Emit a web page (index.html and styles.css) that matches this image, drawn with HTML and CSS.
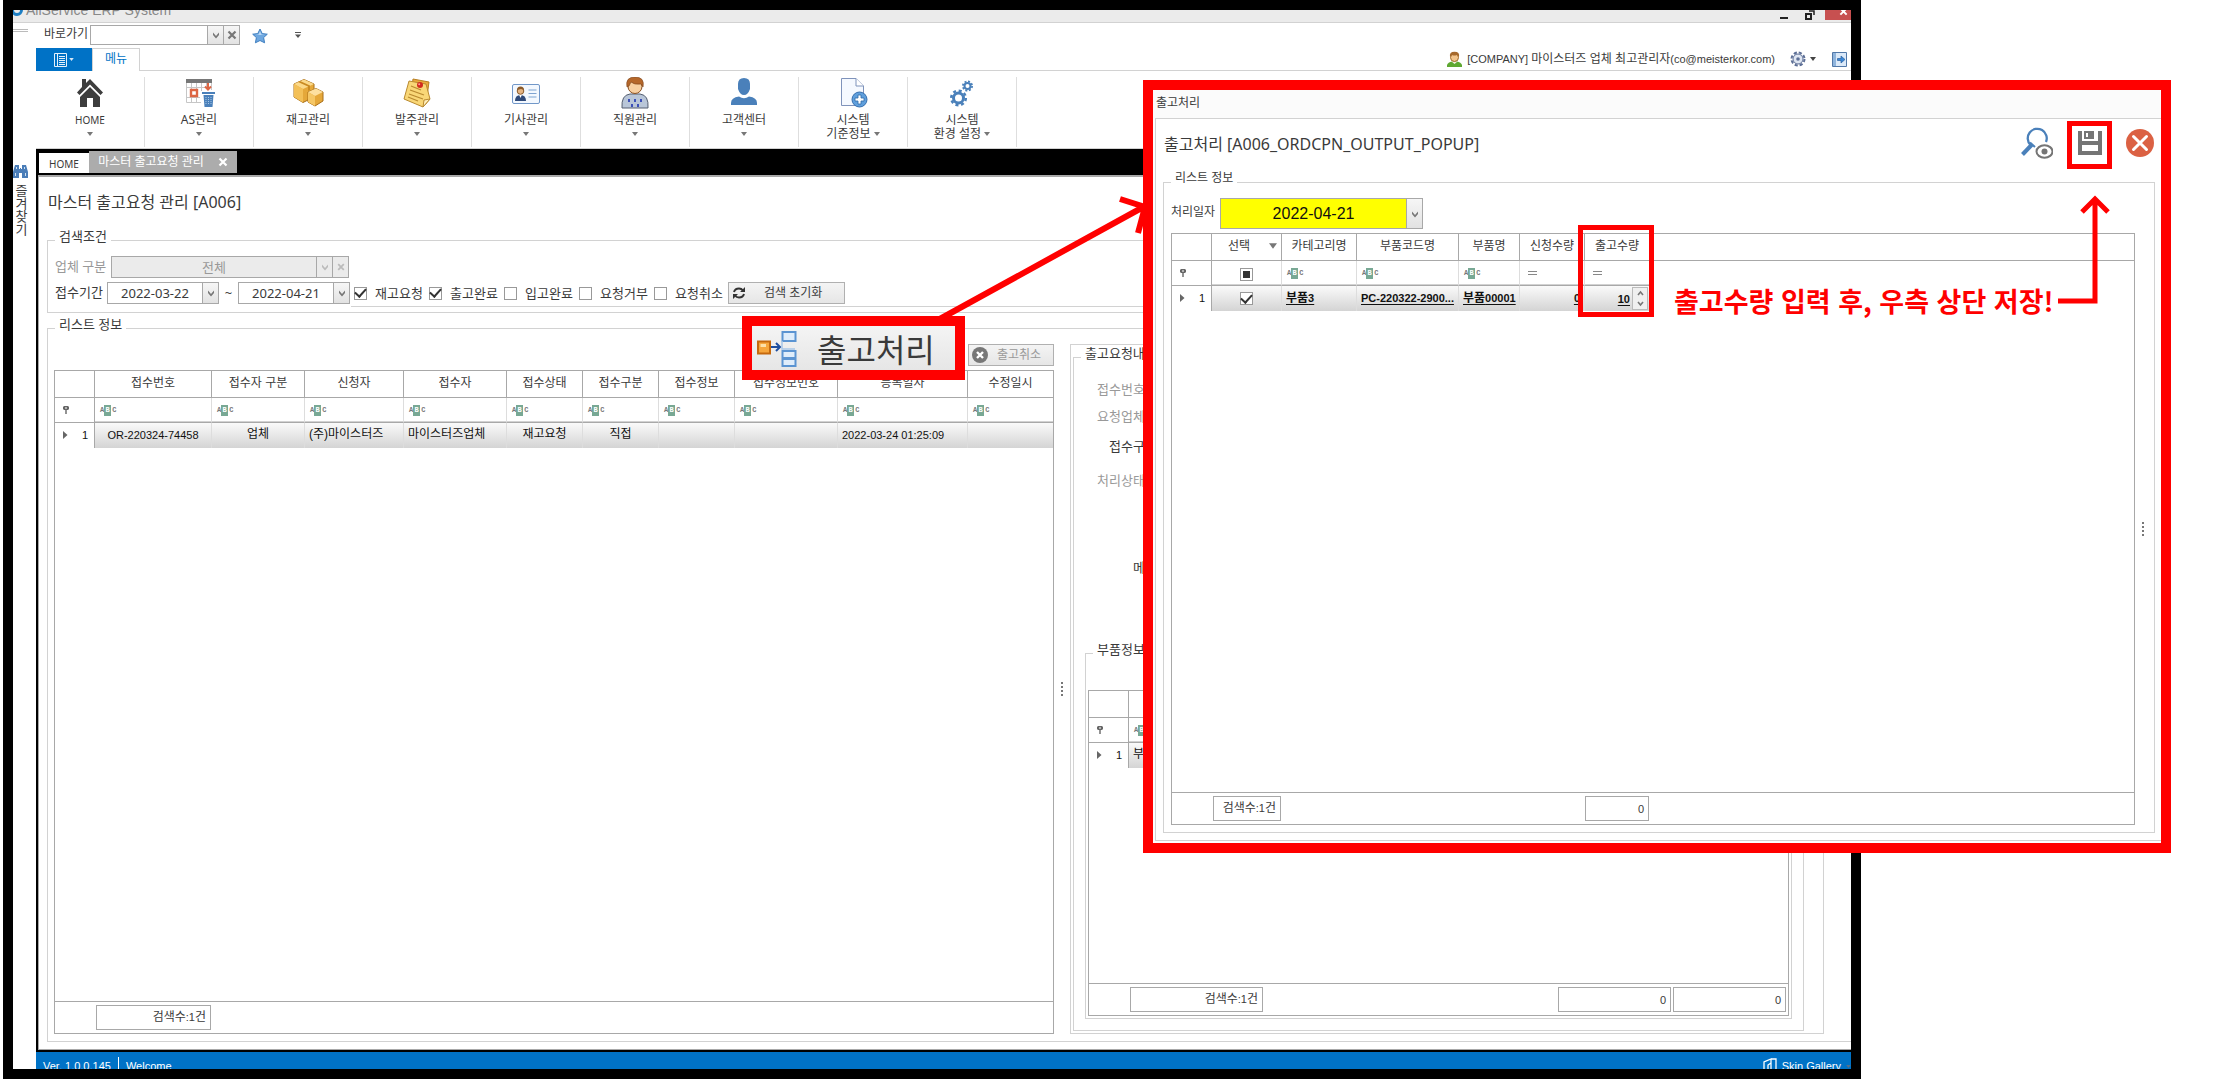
FILE: index.html
```html
<!DOCTYPE html>
<html lang="ko">
<head>
<meta charset="utf-8">
<title>AllService ERP System</title>
<link rel="stylesheet" href="styles.css">
</head>
<body>
<svg class="defs" aria-hidden="true">
  <symbol id="chev" viewBox="0 0 8 8"><path d="M1 1.500 4 5 7 1.500V4L4 7.500 1 4z" fill="currentColor"/></symbol>
  <symbol id="cross" viewBox="0 0 10 10"><path d="M1.500 1.500 8.500 8.500M8.500 1.500 1.500 8.500" stroke="currentColor" stroke-width="2.200" fill="none"/></symbol>
  <symbol id="caret" viewBox="0 0 6 4"><path d="M0 0H6L3 4z" fill="currentColor"/></symbol>
  <symbol id="pin" viewBox="0 0 6 8"><path d="M1 0H5L6 1V3L5 4H3.700V8H2.300V4H1L0 3V1z" fill="#666"/><path d="M2 1.500H4V2.500H2z" fill="#fff"/></symbol>
  <symbol id="rowmark" viewBox="0 0 5 8"><path d="M0 0 4.500 4 0 8z" fill="#666"/></symbol>
</svg>

<div class="app">
  <header class="titlebar">
    <div class="titlebar-name">
      <svg width="10" height="14" viewBox="0 0 10 14"><circle cx="4" cy="7" r="4.500" fill="none" stroke="#1d7fc4" stroke-width="3"/></svg>
      <span>AllService ERP System</span>
    </div>
    <div class="window-buttons">
      <button type="button" aria-label="최소화"><svg width="8" height="6" viewBox="0 0 8 6"><path d="M0 3H8V5H0z" fill="#222"/></svg></button>
      <button type="button" aria-label="이전 크기로"><svg width="10" height="10" viewBox="0 0 10 10"><path d="M1 4H6V9H1z" fill="none" stroke="#222" stroke-width="2"/><path d="M4 1H9V5" fill="none" stroke="#222" stroke-width="1.500"/></svg></button>
      <button type="button" class="win-close" aria-label="닫기"><svg width="9" height="9" viewBox="0 0 10 10" color="#fff"><use href="#cross"/></svg></button>
    </div>
  </header>

  <div class="app-body">
    <aside class="dock">
      <span class="dock-grip"></span>
      <svg width="15" height="15" viewBox="0 0 15 15"><path d="M2 1H6V5H7V4H8V5H9V1H13L15 8V14H9V9H6V14H0V8z" fill="#4a7db8"/><path d="M3 3H4V5H3zM11 3H12V5H11zM2 9H3V12H2zM12 9H13V12H12z" fill="#cfe0f0"/></svg>
      <span class="dock-text">즐겨찾기</span>
    </aside>

    <div class="workspace">
      <div class="quickbar">
        <label for="goto">바로가기</label>
        <div class="combo combo-goto">
          <select id="goto"><option></option></select>
          <span class="combo-btn"><svg width="8" height="8"><use href="#chev"/></svg></span>
          <button type="button" class="combo-btn" aria-label="지우기"><svg width="10" height="10"><use href="#cross"/></svg></button>
        </div>
        <button type="button" class="plain star" aria-label="즐겨찾기"><svg width="16" height="16" viewBox="0 0 16 16"><path d="M8 1 10.200 5.600 15.300 6.200 11.600 9.600 12.600 14.800 8 12.500 3.400 14.800 4.400 9.600 .7 6.200 5.800 5.600z" fill="#6fa8e0" stroke="#3f7fc0"/><path d="M8 3 9.500 6.500 13 7H3L6.500 6.500z" fill="#b5d6f5"/></svg></button>
        <svg class="quick-more" width="6" height="7" viewBox="0 0 6 7"><path d="M0 0H6V1H0zM0 2.500H6L3 6z" fill="#555"/></svg>
      </div>

      <div class="ribbon-tabs">
        <button type="button" class="file-tab" aria-label="파일">
          <svg width="13" height="14" viewBox="0 0 13 14"><path d="M.5 .5H12.500V13.500H.5zM3.500 .5V13.500M5 3.500H11M5 5.500H11M5 7.500H11M5 9.500H11M5 11.500H11" stroke="#e6f0fa" fill="none"/></svg>
          <svg width="5" height="3" color="#d5e6f5"><use href="#caret"/></svg>
        </button>
        <button type="button" class="menu-tab">메뉴</button>
        <div class="user">
          <svg width="15" height="16" viewBox="0 0 15 16"><path d="M0 16V14Q1 11 5 10.500H10Q14 11 15 14V16z" fill="#5fa832"/><path d="M4.500 10.500 7.500 13 10.500 10.500z" fill="#f4f0e0"/><circle cx="7.500" cy="6.500" r="4" fill="#f2c48c" stroke="#a06a2a"/><path d="M3 6Q2 .8 7.500 .8 13 .8 12 6L10 4Q7 5 5 4z" fill="#a5682c"/></svg>
          <span>[COMPANY] <span class="ko">마이스터즈 업체 최고관리자</span>(co@meisterkor.com)</span>
          <button type="button" class="plain gear" aria-label="설정"><svg width="16" height="16" viewBox="0 0 16 16"><circle cx="8" cy="8" r="6.500" fill="none" stroke="#5d6f96" stroke-width="2" stroke-dasharray="3.200 1.900"/><circle cx="8" cy="8" r="5" fill="#dfe6f2" stroke="#5d6f96"/><circle cx="8" cy="8" r="1.800" fill="#5d6f96"/></svg><svg width="6" height="4" color="#444"><use href="#caret"/></svg></button>
          <button type="button" class="plain" aria-label="나가기"><svg width="15" height="15" viewBox="0 0 15 15"><path d="M.5 .5H14.500V14.500H.5z" fill="#dbe9f8" stroke="#5178a8"/><path d="M1 1H4V14H1z" fill="#8fb4dc"/><path d="M5.500 6.500H9V4L13 7.500 9 11V8.500H5.500z" fill="#3b87d6" stroke="#2a5f9e" stroke-width=".7"/></svg></button>
        </div>
      </div>

      <nav class="ribbon">
        <button type="button" class="ribbon-item">
          <svg class="ribbon-icon" viewBox="0 0 32 32"><path d="M16 2 29 15.500 26.500 18 16 7.500 5.500 18 3 15.500 8 10V2H12V6z" fill="#3d3d3d"/><path d="M16 10 26 20V30H19V21H13V30H6V20z" fill="#3d3d3d"/></svg>
          <span class="latin">HOME</span><svg class="drop" width="6" height="4"><use href="#caret"/></svg>
        </button>
        <button type="button" class="ribbon-item">
          <svg class="ribbon-icon" viewBox="0 0 32 32"><path d="M3 2H29V6H3z" fill="#777"/><path d="M3.500 6V25.500H18M3.500 10.500H29M3.500 20.500H17M8.500 6V25M13.500 6V25M18.500 6V14M23.500 6V10M28.500 6V13" fill="none" stroke="#c6c6c6"/><path d="M8 13H14V19H8z" fill="#fff" stroke="#dd6644" stroke-width="2.400"/><path d="M25 6V12M22 9.500 25 12.500 28 9.500" stroke="#dd6644" stroke-width="2" fill="none"/><path d="M19 15H32V17H19zM20.500 18H30.500L29.500 30H21.500z" fill="#4a80ba"/><path d="M23 20V28M25.500 20V28M28 20V28" stroke="#a9c8e6" stroke-dasharray="1 1"/></svg>
          <span>AS관리</span><svg class="drop" width="6" height="4"><use href="#caret"/></svg>
        </button>
        <button type="button" class="ribbon-item">
          <svg class="ribbon-icon" viewBox="0 0 32 32"><path d="M2 7 12 2.500 22 7V20L11 25.500 2 20z" fill="#e5a83a" stroke="#a86e18"/><path d="M2 7 12 2.500 22 7 11 12z" fill="#fbd98a"/><path d="M11 12V25.500L2 20V7z" fill="#f3c058"/><path d="M6 5 16 9.500V14L18 13V8.500L8 4z" fill="#c98a22"/><path d="M16 15 24 11.500 31 15V24L23 29 16 25z" fill="#e5a83a" stroke="#a86e18"/><path d="M16 15 24 11.500 31 15 23 19z" fill="#fde0a0"/><path d="M23 19V29L16 25V15z" fill="#f5c766"/></svg>
          <span>재고관리</span><svg class="drop" width="6" height="4"><use href="#caret"/></svg>
        </button>
        <button type="button" class="ribbon-item">
          <svg class="ribbon-icon" viewBox="0 0 32 32"><path d="M12 2 28 5 25 27 9 24z" fill="#eaa93c" stroke="#b87f22"/><path d="M8 4 25 7 29 22 22 30 3 22z" fill="#f9d777" stroke="#b98a30"/><path d="M10 9 20 13M9 13 23 18M8 17 22 22M7 20 17 24" stroke="#b98a30" stroke-width="1.300"/><path d="M22 30 23 23 29 22z" fill="#fff0bd" stroke="#b98a30"/><circle cx="19" cy="8" r="3" fill="#d22a1e"/><circle cx="18.200" cy="7.200" r="1" fill="#ff9d90"/></svg>
          <span>발주관리</span><svg class="drop" width="6" height="4"><use href="#caret"/></svg>
        </button>
        <button type="button" class="ribbon-item">
          <svg class="ribbon-icon" viewBox="0 0 32 32"><rect x="2.500" y="7.500" width="27" height="19" rx="1.500" fill="#f3f8fe" stroke="#7197c8"/><path d="M5 24Q5 18 10.500 18 16 18 16 24z" fill="#2f4a7a"/><path d="M9 17.500 10.500 21 12 17.500z" fill="#fff"/><circle cx="10.500" cy="14" r="3.300" fill="#e5b583" stroke="#8a5a2a"/><path d="M7 13Q7 9.500 10.500 9.500 14 9.500 14 13L11 12z" fill="#8a5a2a"/><path d="M18.500 13H26.500M18.500 16.500H26.500M18.500 20H26.500" stroke="#7fa3d0" stroke-width="1.200"/></svg>
          <span>기사관리</span><svg class="drop" width="6" height="4"><use href="#caret"/></svg>
        </button>
        <button type="button" class="ribbon-item">
          <svg class="ribbon-icon" viewBox="0 0 32 32"><path d="M3 31Q2 18 11 17H21Q30 18 29 31z" fill="#b9c6d8" stroke="#555f70"/><path d="M9 22H11V25H9zM15 22H17V25H15zM21 22H23V25H21zM12 27H14V30H12zM18 27H20V30H18z" fill="#3c50b8"/><circle cx="16" cy="9.500" r="7" fill="#f7cfa0" stroke="#8a5020"/><path d="M8 10Q6 0 16 0 26 0 24 10L22 7Q15 8 12 5L10 9z" fill="#b5672a" stroke="#7a421a" stroke-width=".6"/></svg>
          <span>직원관리</span><svg class="drop" width="6" height="4"><use href="#caret"/></svg>
        </button>
        <button type="button" class="ribbon-item">
          <svg class="ribbon-icon" viewBox="0 0 32 32"><path d="M10 7Q10 1 16 1 22 1 22 7V12Q20 18 16 18 12 18 10 12z" fill="#4a80ba"/><path d="M3 28V26Q3 20.500 11 19.500 16 23 21 19.500 29 20.500 29 26V28z" fill="#4a80ba"/></svg>
          <span>고객센터</span><svg class="drop" width="6" height="4"><use href="#caret"/></svg>
        </button>
        <button type="button" class="ribbon-item">
          <svg class="ribbon-icon" viewBox="0 0 32 32"><path d="M4.500 1.500H19L26.500 9V28.500H4.500z" fill="#f5f9ff" stroke="#7f93bb"/><path d="M19 1.500V9H26.500" fill="#fff" stroke="#7f93bb"/><circle cx="22.500" cy="22.500" r="7.500" fill="#5f9fdc" stroke="#376fae"/><path d="M21 18H24V21H27V24H24V27H21V24H18V21H21z" fill="#fff" stroke="#2f6aa8" stroke-width=".8"/></svg>
          <span>시스템<br>기준정보 <svg width="6" height="4"><use href="#caret"/></svg></span>
        </button>
        <button type="button" class="ribbon-item">
          <svg class="ribbon-icon" viewBox="0 0 32 32"><circle cx="12.500" cy="21" r="7.300" fill="none" stroke="#4a80ba" stroke-width="2.500" stroke-dasharray="3 2.730"/><circle cx="12.500" cy="21" r="5" fill="none" stroke="#4a80ba" stroke-width="3"/><circle cx="21.500" cy="9" r="4.600" fill="none" stroke="#4a80ba" stroke-width="1.800" stroke-dasharray="2 1.610"/><circle cx="21.500" cy="9" r="3" fill="none" stroke="#4a80ba" stroke-width="2"/></svg>
          <span>시스템<br>환경 설정 <svg width="6" height="4"><use href="#caret"/></svg></span>
        </button>
      </nav>

      <div class="doc-tabs">
        <button type="button" class="doc-tab latin">HOME</button>
        <button type="button" class="doc-tab active"><span>마스터 출고요청 관리</span><svg width="10" height="10"><use href="#cross"/></svg></button>
      </div>

      <main class="page">
        <h1 class="page-title">마스터 출고요청 관리 [A006]</h1>

        <fieldset class="group open-end search">
          <legend>검색조건</legend>
          <div class="search-row disabled">
            <label for="company">업체 구분</label>
            <div class="combo combo-company">
              <select id="company" disabled><option>전체</option></select>
              <span class="combo-btn"><svg width="8" height="8"><use href="#chev"/></svg></span>
              <button type="button" class="combo-btn" aria-label="지우기" disabled><svg width="8" height="8"><use href="#cross"/></svg></button>
            </div>
          </div>
          <div class="search-row">
            <label for="from">접수기간</label>
            <div class="combo combo-date"><input id="from" type="text" value="2022-03-22"><button type="button" class="combo-btn" aria-label="달력"><svg width="8" height="8"><use href="#chev"/></svg></button></div>
            <span class="tilde">~</span>
            <div class="combo combo-date"><input id="to" type="text" value="2022-04-21" aria-label="종료일"><button type="button" class="combo-btn" aria-label="달력"><svg width="8" height="8"><use href="#chev"/></svg></button></div>
            <div class="checks">
              <label><input type="checkbox" checked>재고요청</label>
              <label><input type="checkbox" checked>출고완료</label>
              <label><input type="checkbox">입고완료</label>
              <label><input type="checkbox">요청거부</label>
              <label><input type="checkbox">요청취소</label>
            </div>
            <button type="button" class="btn reset"><svg width="14" height="12" viewBox="0 0 14 12"><path d="M2 5Q3 1.500 7 1.500 9.500 1.500 11 3.500M12 7Q11 10.500 7 10.500 4.500 10.500 3 8.500" fill="none" stroke="#333" stroke-width="2"/><path d="M13 0V5H8zM1 12V7H6z" fill="#333"/></svg><span>검색 초기화</span></button>
          </div>
          <div class="rule"></div>
        </fieldset>

        <fieldset class="group open-end list">
          <legend>리스트 정보</legend>
          <section class="list-pane">
            <div class="toolbar">
              <button type="button" class="btn callout">
                <svg width="40" height="42" viewBox="0 0 40 42"><path d="M1 12.500H13V24.500H1z" fill="#f6a63c" stroke="#c5690e" stroke-width="2"/><path d="M3.500 15H9V18H3.500z" fill="#fde0a8"/><path d="M14 18H22M19 14 23 18 19 22" stroke="#1f4fa0" stroke-width="2" fill="none"/><path d="M25.500 3H38.500V12H25.500zM25.500 22H38.500V29H25.500zM25.500 30H38.500V37H25.500z" fill="#dfedfb" stroke="#5b94d2" stroke-width="2"/><path d="M25 12V20H38" stroke="#a8c6e8" stroke-width="1.500" fill="none"/></svg>
                <span>출고처리</span>
              </button>
              <button type="button" class="btn cancel" disabled><svg width="16" height="16" viewBox="0 0 16 16"><circle cx="8" cy="8" r="8" fill="#777"/><path d="M5 5 11 11M11 5 5 11" stroke="#fff" stroke-width="2.400"/></svg><span>출고취소</span></button>
            </div>
            <div class="grid">
              <table>
                <colgroup><col class="w40"><col class="w117"><col class="w93"><col class="w99"><col class="w103"><col class="w76"><col class="w76"><col class="w76"><col class="w103"><col class="w130"><col></colgroup>
                <thead>
                  <tr><th></th><th>접수번호</th><th>접수자 구분</th><th>신청자</th><th>접수자</th><th>접수상태</th><th>접수구분</th><th>접수정보</th><th>접수정보번호</th><th>등록일자</th><th>수정일시</th></tr>
                </thead>
                <tbody>
                  <tr class="filter"><td class="mark"><svg width="6" height="8"><use href="#pin"/></svg></td><td><span class="abc">A<b>B</b>C</span></td><td><span class="abc">A<b>B</b>C</span></td><td><span class="abc">A<b>B</b>C</span></td><td><span class="abc">A<b>B</b>C</span></td><td><span class="abc">A<b>B</b>C</span></td><td><span class="abc">A<b>B</b>C</span></td><td><span class="abc">A<b>B</b>C</span></td><td><span class="abc">A<b>B</b>C</span></td><td><span class="abc">A<b>B</b>C</span></td><td><span class="abc">A<b>B</b>C</span></td></tr>
                  <tr class="data"><td class="mark"><svg width="5" height="8"><use href="#rowmark"/></svg><span>1</span></td><td class="c">OR-220324-74458</td><td class="c ko">업체</td><td class="ko">(주)마이스터즈</td><td class="ko">마이스터즈업체</td><td class="c ko">재고요청</td><td class="c ko">직접</td><td></td><td></td><td>2022-03-24 01:25:09</td><td></td></tr>
                </tbody>
              </table>
              <div class="grid-foot"><output class="sum sum-main"><span class="ko">검색수</span>:1<span class="ko">건</span></output></div>
            </div>
          </section>

          <div class="splitter"><i></i><i></i><i></i><i></i></div>

          <section class="detail-pane">
            <fieldset class="group detail">
              <legend>출고요청내역</legend>
              <ul class="fields">
                <li class="dim">접수번호</li>
                <li class="dim">요청업체</li>
                <li class="tall indent">접수구분</li>
                <li class="tall dim">처리상태</li>
                <li class="memo">메모</li>
              </ul>
              <fieldset class="group parts">
                <legend>부품정보</legend>
                <div class="grid">
                  <table>
                    <colgroup><col class="w40"><col></colgroup>
                    <thead><tr><th></th><th></th></tr></thead>
                    <tbody>
                      <tr class="filter"><td class="mark"><svg width="6" height="8"><use href="#pin"/></svg></td><td><span class="abc">A<b>B</b>C</span></td></tr>
                      <tr class="data"><td class="mark"><svg width="5" height="8"><use href="#rowmark"/></svg><span>1</span></td><td class="ko">부품3</td></tr>
                    </tbody>
                  </table>
                  <div class="grid-foot"><output class="sum sum-parts"><span class="ko">검색수</span>:1<span class="ko">건</span></output><output class="sum sum-qty push">0</output><output class="sum sum-qty">0</output></div>
                </div>
              </fieldset>
            </fieldset>
          </section>
        </fieldset>
      </main>

      <footer class="status">
        <div class="status-line">
          <span>Ver. 1.0.0.145</span><span class="status-sep"></span><span>Welcome</span>
          <button type="button" class="skin"><svg width="14" height="16" viewBox="0 0 14 16"><path d="M1 16V4L8 1V13L5 16M8 1H13V16M5 16V7L8 5" fill="none" stroke="#fff" stroke-width="1.300"/></svg>Skin Gallery <svg width="5" height="3" color="#5a6f86"><use href="#caret"/></svg></button>
        </div>
      </footer>
    </div>
  </div>
</div>

<svg class="link-arrow" width="220" height="130" viewBox="0 0 220 130" aria-hidden="true"><path d="M9 125 218 10M191 4 216 12 209 38" fill="none" stroke="#f00" stroke-width="6"/></svg>

<div class="popup" role="dialog" aria-label="출고처리">
  <div class="popup-caption">출고처리</div>
  <div class="popup-body">
    <div class="popup-head">
      <h2>출고처리 [A006_ORDCPN_OUTPUT_POPUP]</h2>
      <div class="popup-actions">
        <button type="button" class="action" aria-label="조회"><svg width="32" height="32" viewBox="0 0 32 32"><path d="M9.500 18A9.500 9.500 0 1 1 25 15" fill="none" stroke="#4a80ba" stroke-width="2.300"/><path d="M11 17.500 1.500 27.500" stroke="#4a80ba" stroke-width="4"/><path d="M9 15.500 14 20" stroke="#4a80ba" stroke-width="2"/><ellipse cx="23.500" cy="24.500" rx="8" ry="6.200" fill="#fff" stroke="#757575" stroke-width="2"/><circle cx="23.500" cy="24.500" r="3" fill="#757575"/></svg></button>
        <button type="button" class="action save" aria-label="저장"><svg width="24" height="24" viewBox="0 0 24 24"><path d="M0 0H4V10H20V0H24V24H0zM4 14V20H20V14z" fill="#757575" fill-rule="evenodd"/><path d="M6 0H16V8H6zM8 2V6H10V2z" fill="#757575" fill-rule="evenodd"/></svg></button>
        <button type="button" class="action" aria-label="닫기"><svg width="28" height="28" viewBox="0 0 28 28"><circle cx="14" cy="14" r="14" fill="#db6143"/><path d="M7.500 7.500 20.500 20.500M20.500 7.500 7.500 20.500" stroke="#fff" stroke-width="3" stroke-linecap="round"/></svg></button>
      </div>
    </div>
    <fieldset class="group popup-group">
      <legend>리스트 정보</legend>
      <div class="popup-date">
        <label for="workdate">처리일자</label>
        <div class="combo combo-work"><input id="workdate" type="text" value="2022-04-21"><button type="button" class="combo-btn" aria-label="달력"><svg width="8" height="8"><use href="#chev"/></svg></button></div>
      </div>
      <div class="popup-list">
        <div class="grid">
          <table>
            <colgroup><col class="w40"><col class="w70"><col class="w75"><col class="w102"><col class="w61"><col class="w65"><col class="w65"><col></colgroup>
            <thead>
              <tr><th></th><th><span class="sorted">선택<svg width="8" height="6"><use href="#caret"/></svg></span></th><th>카테고리명</th><th>부품코드명</th><th>부품명</th><th>신청수량</th><th>출고수량</th><th></th></tr>
            </thead>
            <tbody>
              <tr class="filter"><td class="mark"><svg width="6" height="8"><use href="#pin"/></svg></td><td class="c"><input type="checkbox" class="mixed" aria-label="모두 선택"></td><td><span class="abc">A<b>B</b>C</span></td><td><span class="abc">A<b>B</b>C</span></td><td><span class="abc">A<b>B</b>C</span></td><td><span class="eq"></span></td><td><span class="eq"></span></td><td class="void"></td></tr>
              <tr class="data"><td class="mark"><svg width="5" height="8"><use href="#rowmark"/></svg><span>1</span></td><td class="c"><input type="checkbox" checked aria-label="선택"></td><td><a href="#"><span class="ko">부품</span>3</a></td><td><a href="#">PC-220322-2900...</a></td><td><a href="#"><span class="ko">부품</span>00001</a></td><td class="r"><a href="#">0</a></td><td class="qty"><div class="spin"><input type="text" value="10" aria-label="출고수량"><div class="spin-btns"><button type="button" aria-label="증가"><svg width="7" height="6" viewBox="0 0 7 6"><path d="M1 5 3.500 2 6 5" fill="none" stroke="#777" stroke-width="1.600"/></svg></button><button type="button" aria-label="감소"><svg width="7" height="6" viewBox="0 0 7 6"><path d="M1 1 3.500 4 6 1" fill="none" stroke="#777" stroke-width="1.600"/></svg></button></div></div></td><td class="void"></td></tr>
            </tbody>
          </table>
          <div class="grid-foot"><output class="sum sum-popup"><span class="ko">검색수</span>:1<span class="ko">건</span></output><output class="sum sum-out">0</output></div>
        </div>
        <div class="splitter"><i></i><i></i><i></i><i></i></div>
      </div>
    </fieldset>
  </div>
  <span class="qty-frame"></span>
  <p class="note">출고수량 입력 후, 우측 상단 저장!</p>
  <svg class="note-arrow" width="54" height="112" viewBox="0 0 54 112" aria-hidden="true"><path d="M0 108H37V6M24 19 37 6 50 19" fill="none" stroke="#f00" stroke-width="5"/></svg>
</div>
</body>
</html>
```
FILE: styles.css
```css
* { box-sizing: border-box; }

:root {
  --line: #d2d2d2;
  --edge: #a8a8a8;
  --ink: #3a3a3a;
  --blue: #0072c6;
  --red: #f00;
}

body {
  margin: 0;
  min-height: 100vh;
  position: relative;
  overflow: hidden;
  background: #fff;
  color: var(--ink);
  font: 12px/16px "Noto Sans", "Noto Sans CJK KR", sans-serif;
}

button, input, select { font: inherit; color: inherit; margin: 0; padding: 0; border: 0; background: none; }
fieldset { min-width: 0; margin: 0; }
svg { display: block; flex: none; }
.defs { position: absolute; width: 0; height: 0; }
.ko { font-size: 12px; }
.latin { font-size: 10px; }
.plain { display: flex; align-items: center; }

/* application window */
.app {
  height: calc(100vh - 1px);
  margin: 0 364px 0 3px;
  border: 10px solid #000;
  display: flex;
  flex-direction: column;
  overflow: hidden;
  background: #fff;
}

.titlebar {
  flex: none;
  height: 13px;
  display: flex;
  justify-content: space-between;
  overflow: hidden;
  background: #ebebeb;
  border-bottom: 1px solid var(--line);
}
.titlebar-name {
  align-self: flex-end;
  display: flex;
  align-items: center;
  gap: 3px;
  height: 24px;
  color: #888;
  font: 14px/24px "Liberation Sans", sans-serif;
}
.window-buttons { display: flex; height: 10px; align-items: flex-end; gap: 12px; }
.window-buttons button { height: 8px; width: 14px; display: flex; justify-content: center; align-items: flex-end; }
.window-buttons .win-close { width: 26px; height: 10px; margin-left: -4px; background: #c75050; align-items: flex-start; }
.win-close svg { margin: -3px 0 0 10px; }

.app-body { flex: 1; display: flex; min-height: 0; }
.dock { flex: none; width: 23px; overflow: hidden; }
.dock-grip { display: block; width: 15px; height: 3px; margin: 6px 0 132px; border: solid #bbb; border-width: 1px 0; }
.dock-text { display: block; width: 15px; margin-top: 5px; font-size: 13px; line-height: 15px; writing-mode: vertical-rl; text-orientation: upright; }

.workspace { flex: 1; min-width: 0; display: flex; flex-direction: column; }

/* quick access row */
.quickbar { flex: none; height: 25px; display: flex; align-items: center; padding-left: 8px; }
.quickbar label { width: 46px; padding-bottom: 4px; }
.star { margin: 0 27px 0 12px; }

.combo { display: flex; height: 22px; border: 1px solid var(--edge); background: #fff; }
.combo select, .combo input { flex: 1; min-width: 0; appearance: none; text-align: center; text-align-last: center; outline: 0; }
.combo-btn { flex: none; width: 16px; display: flex; align-items: center; justify-content: center; border-left: 1px solid var(--edge); background: linear-gradient(#f6f6f6, #e2e2e2); color: #777; }
.combo-goto { width: 150px; height: 20px; margin-bottom: 1px; }

/* ribbon */
.ribbon-tabs { flex: none; height: 23px; display: flex; border-bottom: 1px solid var(--line); }
.file-tab { width: 56px; height: 23px; display: flex; align-items: center; justify-content: center; gap: 2px; background: var(--blue); }
.menu-tab { width: 48px; height: 23px; padding-bottom: 3px; border: 1px solid var(--line); border-bottom: 0; background: #fff; color: var(--blue); }
.user { margin-left: auto; display: flex; align-items: center; padding-right: 4px; gap: 5px; font: 11px/22px "Liberation Sans", "Noto Sans CJK KR", sans-serif; }
.gear { gap: 4px; margin: 0 5px 0 10px; }
.user .plain:last-child { margin-left: 6px; }

.ribbon { flex: none; height: 78px; display: flex; border-bottom: 1px solid var(--line); padding: 6px 0 1px; color: #777; }
.ribbon-item { width: 109px; display: flex; flex-direction: column; align-items: center; border-right: 1px solid #dedede; line-height: 14px; }
.ribbon-item > span { color: var(--ink); }
.ribbon-item > span svg { display: inline-block; vertical-align: 2px; color: #777; }
.ribbon-icon { width: 32px; height: 32px; margin-bottom: 4px; }
.drop { margin-top: 5px; }

/* document tabs */
.doc-tabs { flex: none; height: 26px; display: flex; align-items: flex-end; padding-left: 3px; background: #000; }
.doc-tab { width: 50px; height: 22px; background: #fff; }
.doc-tab.active { width: 148px; height: 24px; display: flex; align-items: center; justify-content: center; gap: 14px; padding-bottom: 2px; background: #acacac; color: #fff; }

.page {
  flex: 1;
  min-height: 0;
  display: flex;
  flex-direction: column;
  padding: 0 0 7px 8px;
  border: solid #a8a8a8;
  border-width: 2px 0 1px 1px;
  outline: 2px solid #000;
  margin: 0 0 2px 2px;
}
.page-title { margin: 0; padding-left: 1px; height: 51px; flex: none; font-size: 16px; font-weight: 400; line-height: 50px; }

.group { padding: 0; border: 1px solid var(--line); }
.group > legend { margin-left: 7px; padding: 0 4px 8px; line-height: 16px; font-size: 13px; }
.open-end { border-right: 0; }

.search { flex: none; height: 85px; margin-bottom: 3px; font-size: 13px; }
.search-row { display: flex; align-items: center; height: 22px; margin: 4px 0 0 7px; }
.search-row > label { width: 52px; padding-bottom: 2px; white-space: nowrap; }
.disabled { color: #999; }
.disabled > label { width: 56px; }
.disabled .combo select { opacity: 1; }
.disabled .combo { background: #ebebeb; }
.disabled .combo-btn { color: #bbb; background: #ebebeb; }
.combo-company { width: 238px; }
.combo-date { width: 112px; }
.tilde { width: 19px; text-align: center; }
.rule { height: 1px; margin: 2px 0 0 303px; background: var(--line); }
.checks { display: flex; margin-left: 4px; }
.checks label { width: 75px; display: flex; align-items: center; gap: 8px; white-space: nowrap; }

input[type="checkbox"] { appearance: none; flex: none; width: 13px; height: 13px; border: 1px solid #999; background: #fff; display: inline-grid; place-items: center; }
input[type="checkbox"]:checked::after { content: ""; width: 9px; height: 5px; margin-bottom: 3px; border: solid #333; border-width: 0 0 2px 2px; transform: rotate(-48deg); }
input.mixed::after { content: ""; width: 7px; height: 7px; background: #333; }

.btn { display: flex; align-items: center; border: 1px solid #b0b0b0; background: linear-gradient(#f4f4f4, #e6e6e6); white-space: nowrap; }
.reset { width: 117px; height: 22px; padding-left: 3px; gap: 18px; font-size: 12px; margin-left: -1px; }

/* list and detail */
.list { flex: 1; min-height: 0; display: grid; grid-template-columns: minmax(0, 1000fr) 16px minmax(0, 754fr); grid-template-rows: minmax(0, 1fr); padding: 4px 27px 7px 6px; }
.list > legend { margin-left: 1px; }
.list-pane { min-width: 0; display: flex; flex-direction: column; }
.toolbar { flex: none; height: 26px; display: flex; justify-content: flex-end; align-items: flex-start; gap: 3px; }
.callout { position: relative; z-index: 1; flex: none; width: 223px; height: 64px; margin-top: -28px; padding: 3px 0 0 5px; gap: 20px; border: 10px solid var(--red); font-size: 32px; line-height: 40px; }
.cancel { width: 86px; height: 22px; gap: 9px; padding-left: 3px; color: #999; font-size: 12px; }

.grid { flex: 1; min-width: 0; display: flex; flex-direction: column; border: 1px solid var(--edge); font: 11px/16px "Liberation Sans", "Noto Sans CJK KR", sans-serif; }
.grid table { width: 100%; table-layout: fixed; border-spacing: 0; }
.grid th, .grid td { padding: 0 4px; text-align: left; white-space: nowrap; overflow: hidden; }
.grid th { height: 27px; padding: 0 0 3px; font-size: 12px; font-weight: 400; text-align: center; border: solid var(--edge); border-width: 0 1px 1px 0; }
.grid td { height: 25px; border-right: 1px solid #ddd; }
.filter td { border-bottom: 1px solid var(--edge); box-shadow: inset 0 -1px var(--line); }
.grid td.mark { padding-left: 8px; border-right-color: var(--edge); color: #222; box-shadow: none; }
.grid tr > :last-child { border-right: 0; }
.mark svg { display: inline-block; margin-right: 14px; }
.grid .data td { color: #111; padding-bottom: 2px; }
.data td:not(.mark):not(.void) { background: linear-gradient(#fafafa, #d4d4d4); }
.grid .data td.ko { padding-bottom: 4px; }
.grid td.c { text-align: center; }
.grid td.r { text-align: right; }
.grid td.void { border: 0; box-shadow: none; }
.data a { color: #111; font-weight: 700; text-underline-offset: 2px; }
.data .c input, .filter .c input { vertical-align: middle; }

.abc { display: flex; align-items: center; margin-left: 1px; color: #777; font: 700 7px/11px "Liberation Mono", monospace; }
.abc b { width: 7px; margin: 0 1px 0 0; text-align: center; background: #78a894; color: #fff; }
.eq { display: block; width: 9px; height: 4px; margin-left: 4px; border: solid #888; border-width: 1px 0; }

.w40 { width: 40px; } .w61 { width: 61px; } .w65 { width: 65px; } .w70 { width: 70px; } .w75 { width: 75px; }
.w76 { width: 76px; } .w93 { width: 93px; } .w99 { width: 99px; } .w102 { width: 102px; } .w103 { width: 103px; }
.w117 { width: 117px; } .w130 { width: 130px; }

.grid-foot { height: 32px; margin-top: auto; padding: 3px 2px 3px 41px; display: flex; gap: 2px; border-top: 1px solid var(--edge); }
.sum { height: 25px; padding: 3px 4px; text-align: right; border: 1px solid var(--edge); white-space: nowrap; }
.sum-main { width: 115px; }
.sum-parts { width: 133px; }
.sum-qty { width: 113px; padding-top: 4px; }
.push { margin-left: auto; }
.sum-popup { width: 68px; }
.sum-out { width: 64px; margin-left: 302px; padding-top: 4px; }

.splitter { flex: none; width: 16px; display: flex; flex-direction: column; align-items: center; justify-content: center; gap: 2px; }
.splitter i { width: 2px; height: 2px; background: #777; }

.detail-pane { min-width: 0; display: flex; padding: 0 19px 2px 2px; border: 1px solid var(--line); }
.detail { flex: 1; display: flex; flex-direction: column; padding: 0 11px 11px; }
.detail > legend { margin-left: -4px; }
.fields { list-style: none; margin: 6px 0 5px; padding: 0 0 0 12px; font-size: 13px; }
.fields li { height: 27px; display: flex; align-items: center; }
.fields .tall { height: 34px; }
.fields .indent { padding-left: 12px; }
.fields .memo { height: 139px; padding-left: 36px; }
.dim { color: #999; }
.parts { flex: 1; display: flex; flex-direction: column; padding: 25px 2px 2px; }
.parts > legend { margin-left: 5px; }

.status { flex: none; height: 17px; overflow: hidden; background: var(--blue); color: #fff; font: 11px/28px "Liberation Sans", sans-serif; }
.status-line { display: flex; height: 28px; padding: 0 0 0 7px; align-items: center; }
.status-sep { width: 1px; height: 18px; margin: 0 7px; background: #fff; }
.skin { margin-left: auto; display: flex; align-items: center; gap: 5px; }

/* walkthrough overlay */
.link-arrow { position: absolute; left: 929px; top: 195px; z-index: 1; }

.popup {
  position: absolute;
  z-index: 2;
  left: 1143px;
  right: 54px;
  top: 80px;
  height: 773px;
  display: flex;
  flex-direction: column;
  border: 10px solid var(--red);
  background: #fdfdfd;
}
.popup-caption { flex: none; height: 28px; padding: 5px 3px; background: #fbfbfb; }
.popup-body { flex: 1; min-height: 0; display: flex; flex-direction: column; margin: 0 0 2px 2px; padding: 0 6px 7px 7px; border: solid var(--line); border-width: 1px 0 1px 1px; background: #fff; }
.popup-head { flex: none; height: 51px; display: flex; justify-content: space-between; }
.popup-head h2 { margin: 0; font-size: 16px; font-weight: 400; line-height: 50px; white-space: nowrap; padding-left: 1px; }
.popup-actions { display: flex; align-items: center; gap: 14px; padding: 1px 1px 0 0; }
.action { display: flex; align-items: center; height: 48px; padding-bottom: 5px; }
.save { width: 45px; justify-content: center; border: 5px solid var(--red); }
.popup-group { flex: 1; min-height: 0; display: flex; flex-direction: column; padding: 4px 0 7px 7px; }
.popup-group > legend { margin-left: 0; font-size: 12px; }
.popup-date { display: flex; align-items: center; height: 31px; margin-bottom: 4px; }
.popup-date label { width: 49px; padding-bottom: 4px; }
.combo-work { width: 203px; height: 31px; }
.combo-work input { background: #ff0; color: #111; font: 16px/28px "Liberation Sans", sans-serif; }
.popup-list { flex: 1; min-height: 0; display: flex; }
.popup-list .splitter { width: 19px; padding-right: 3px; }

.sorted { display: flex; align-items: center; justify-content: flex-end; gap: 19px; padding-right: 4px; color: var(--ink); }
.sorted svg { color: #777; }
.grid .data td.qty { padding: 0 1px; }
.spin { display: flex; height: 23px; align-items: center; gap: 2px; }
.spin > input { flex: 1; min-width: 0; text-align: right; font-weight: 700; text-decoration: underline; text-underline-offset: 2px; }
.spin-btns { width: 16px; height: 23px; display: flex; flex-direction: column; border: 1px solid #bbb; background: #f0f0f0; }
.spin-btns button { flex: 1; display: flex; align-items: center; justify-content: center; }

.qty-frame { position: absolute; left: 425px; top: 135px; width: 76px; height: 92px; border: 5px solid var(--red); }
.note { position: absolute; left: 521px; top: 193px; margin: 0; color: var(--red); font: 700 27px/36px "Noto Sans CJK KR", sans-serif; white-space: nowrap; }
.note-arrow { position: absolute; left: 905px; top: 103px; }
```
